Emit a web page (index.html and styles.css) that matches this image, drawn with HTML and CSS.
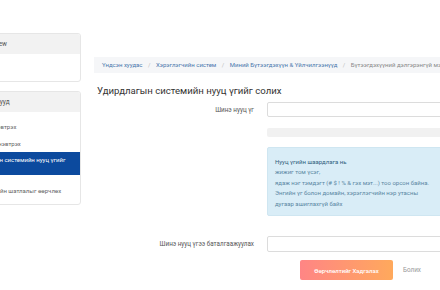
FILE: index.html
```html
<!DOCTYPE html>
<html lang="mn">
<head>
    <meta charset="UTF-8">
    <meta name="viewport" content="width=device-width, initial-scale=1.0">
    <title>Нууц үг солих</title>
    <link rel="stylesheet" href="styles.css">
</head>
<body>
    <div class="page">
        <aside class="sidebar">
            <div class="side-card">
                <div class="side-head">Site Overview</div>
                <div class="side-empty"></div>
            </div>
            <div class="side-card">
                <div class="side-head">Тохиргоонууд</div>
                <ul class="side-list">
                    <li>Системд нэвтрэх</li>
                    <li>Админаар нэвтрэх</li>
                    <li class="active">Удирдлагын системийн нууц үгийг солих</li>
                    <li class="last">Хэрэглэгчийн шатлалыг өөрчлөх</li>
                </ul>
            </div>
        </aside>

        <main class="main">
            <nav class="breadcrumb">
                <a href="#">Үндсэн хуудас</a>
                <span class="sep">/</span>
                <a href="#">Хэрэглэгчийн систем</a>
                <span class="sep">/</span>
                <a href="#">Миний Бүтээгдэхүүн &amp; Үйлчилгээнүүд</a>
                <span class="sep">/</span>
                <span class="current">Бүтээгдэхүүний дэлгэрэнгүй мэдээлэл</span>
            </nav>

            <h1 class="title">Удирдлагын системийн нууц үгийг солих</h1>

            <form class="form">
                <label class="label" for="pass">Шинэ нууц үг</label>
                <input class="input" id="pass" type="password">

                <div class="strength"></div>

                <div class="info">
                    <p class="info-title">Нууц үгийн шаардлага нь</p>
                    <p>жижиг том үсэг,</p>
                    <p>ядаж нэг тэмдэгт (# $ ! % &amp; гэх мэт...) тоо орсон байна.</p>
                    <p>Энгийн үг болон домайн, хэрэглэгчийн нэр утасны</p>
                    <p>дугаар ашиглахгүй байх</p>
                </div>

                <label class="label label-confirm" for="pass2">Шинэ нууц үгээ баталгаажуулах</label>
                <input class="input input-confirm" id="pass2" type="password">

                <div class="actions">
                    <button type="button" class="btn-save">Өөрчлөлтийг Хадгалах</button>
                    <a href="#" class="btn-cancel">Болих</a>
                </div>
            </form>
        </main>
    </div>
</body>
</html>
```

FILE: styles.css
```css
body {
    margin: 0;
    width: 440px;
    height: 290px;
    overflow: hidden;
    background-color: #fff;
    font-family: Roboto, "Noto Sans", sans-serif;
    color: #444;
}
.page {
    display: flex;
    align-items: flex-start;
    width: 640px;
}
.sidebar {
    flex: 0 0 124px;
    margin-left: -43px;
    padding-top: 33px;
    display: flex;
    flex-direction: column;
    gap: 9px;
}
.side-card {
    border: 1px solid #e6e6e6;
    border-radius: 3px;
    background-color: #fff;
    overflow: hidden;
}
.side-head {
    height: 20px;
    line-height: 20px;
    padding-left: 10px;
    background-color: #f2f2f2;
    font-size: 6.5px;
    color: #555;
}
.side-empty {
    height: 27px;
}
.side-list {
    list-style: none;
    margin: 0;
    padding: 6px 0 5px;
}
.side-list li {
    padding: 4px 8px 4px 10px;
    line-height: 9px;
    font-size: 6px;
    color: #666;
}
.side-list li.active {
    padding: 4px 8px 3px 10px;
    line-height: 8px;
    background-color: #0c4a9e;
    color: #fff;
}
.side-list li.last {
    padding-top: 11px;
}
.main {
    flex: 0 0 520px;
    margin-left: 13px;
    padding-top: 57px;
}
.breadcrumb {
    height: 16px;
    line-height: 16px;
    padding-left: 8px;
    background-color: #f5f6f8;
    font-size: 6px;
    white-space: nowrap;
}
.breadcrumb a {
    color: #4a77ad;
    text-decoration: none;
}
.breadcrumb .sep {
    margin: 0 4px;
    color: #bbb;
}
.breadcrumb .current {
    color: #888;
}
.title {
    margin: 12px 0 5px 3px;
    font-size: 9.6px;
    line-height: 12px;
    font-weight: 400;
    color: #333;
}
.form {
    display: grid;
    grid-template-columns: 160px 1fr;
    column-gap: 13px;
}
.label {
    grid-column: 1;
    align-self: center;
    text-align: right;
    font-size: 6.3px;
    color: #555;
}
.input {
    grid-column: 2;
    height: 15px;
    box-sizing: border-box;
    border: 1px solid #dcdcdc;
    border-radius: 2px;
    padding: 0 6px;
    font-size: 7px;
}
.strength {
    grid-column: 2;
    height: 9px;
    margin-top: 11px;
    border-radius: 2px;
    background-color: #f1f1f1;
}
.info {
    grid-column: 2;
    margin-top: 10px;
    padding: 9px 7px 6px;
    border: 1px solid #cfe6f1;
    border-radius: 2px;
    background-color: #d9edf7;
    font-size: 6px;
    line-height: 10.4px;
    color: #5a87a3;
    white-space: nowrap;
}
.info p {
    margin: 0;
}
.info .info-title {
    color: #2f5d7c;
}
.label-confirm,
.input-confirm {
    margin-top: 20px;
}
.input-confirm {
    height: 16px;
}
.actions {
    grid-column: 2;
    margin-top: 8px;
    padding-left: 33px;
    display: flex;
    align-items: center;
    gap: 10px;
}
.btn-save {
    width: 93px;
    height: 20px;
    border: none;
    border-radius: 2px;
    background: linear-gradient(to right, #ff8585, #ffa95c);
    color: #fff;
    font-family: Roboto, sans-serif;
    font-size: 6px;
    font-weight: 500;
    cursor: pointer;
}
.btn-cancel {
    font-size: 6.3px;
    color: #999;
    text-decoration: none;
}
```
